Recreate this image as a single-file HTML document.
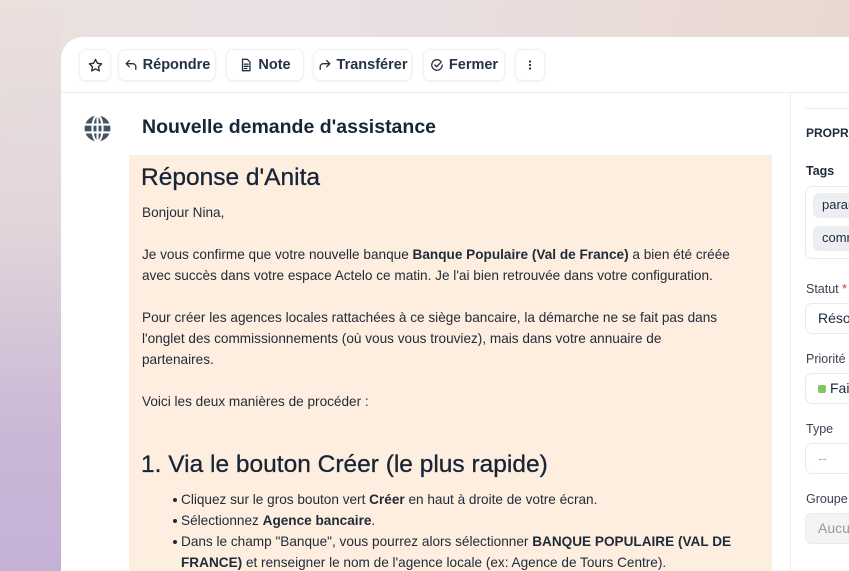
<!DOCTYPE html>
<html><head><meta charset="utf-8"><style>
*{margin:0;padding:0;box-sizing:border-box}
html,body{width:849px;height:571px;overflow:hidden}
body{font-family:"Liberation Sans",sans-serif;color:#1c2a3a;position:relative;
background:linear-gradient(100deg,#ebe0dc 0%,#e8e0e4 35%,#eadbd6 70%,#e8d7cf 100%);}
.purple{position:absolute;left:0;top:0;width:61px;height:571px;background:linear-gradient(180deg,rgba(0,0,0,0) 0%,#e1d5da 40%,#cbb8d6 75%,#c4b1d6 100%)}
.card{position:absolute;left:61px;top:37px;width:788px;height:534px;background:#fff;border-radius:22px 0 0 0;overflow:hidden}
.bar{position:absolute;left:0;top:0;width:100%;height:56px;border-bottom:1px solid #eceef0}
.btn{position:absolute;top:12px;height:32px;border:1px solid #eef0f2;border-radius:7px;box-shadow:0 1px 2px rgba(0,0,0,.05);font-size:14.5px;font-weight:bold;display:flex;align-items:center;justify-content:center;gap:5px;color:#253244}
.btn svg{width:14px;height:14px;fill:none;stroke:#253244;stroke-width:1.5;stroke-linecap:round;stroke-linejoin:round}
.t{position:absolute;white-space:nowrap}
.content{position:absolute;left:68px;top:118px;width:643px;height:416px;background:#fdeee0;overflow:hidden}
.p{position:absolute;left:13px;font-size:13.6px;line-height:21px;white-space:nowrap;color:#1f2a38}
.h{position:absolute;left:12px;font-size:24.5px;white-space:nowrap;color:#172536;-webkit-text-stroke:0.3px #172536}
li{list-style:none;position:relative}
li:before{content:"";position:absolute;left:-8px;top:9px;width:4px;height:4px;border-radius:50%;background:#1f2a38}
.side{position:absolute;left:729px;top:56px;width:59px;height:478px;border-left:1px solid #eef0f2;overflow:hidden}
.lab{position:absolute;left:15px;font-size:12.5px;color:#3a4250;white-space:nowrap}
.box{position:absolute;left:14px;width:80px;border:1px solid #e8eaed;border-radius:7px;white-space:nowrap}
</style></head><body>
<div class="purple"></div>
<div class="card">
 <div class="bar">
  <div class="btn" style="left:18px;width:32px"><svg viewBox="0 0 16 16" style="width:15px;height:15px"><path d="M8 1.5l2 4.1 4.5.6-3.3 3.1.8 4.5L8 11.6 4 13.8l.8-4.5L1.5 6.2 6 5.6z"/></svg></div>
  <div class="btn" style="left:57px;width:98px"><svg viewBox="0 0 16 16"><path d="M6 3L2.5 6.5 6 10M2.5 6.5H10a3.5 3.5 0 0 1 3.5 3.5v3"/></svg>Répondre</div>
  <div class="btn" style="left:165px;width:78px"><svg viewBox="0 0 16 16"><path d="M4 1.5h5.5L12.5 4.5v10h-8.5zM6 7h4.5M6 9.5h4.5M6 12h3"/></svg>Note</div>
  <div class="btn" style="left:252px;width:99px"><svg viewBox="0 0 16 16"><path d="M10 3l3.5 3.5L10 10M13.5 6.5H6A3.5 3.5 0 0 0 2.5 10v3"/></svg>Transférer</div>
  <div class="btn" style="left:362px;width:82px"><svg viewBox="0 0 16 16"><path d="M14 8a6 6 0 1 1-2-4.5M5.5 8l2 2 5.5-5.5"/></svg>Fermer</div>
  <div class="btn" style="left:454px;width:30px"><svg viewBox="0 0 16 16"><circle cx="8" cy="4" r=".6"/><circle cx="8" cy="8" r=".6"/><circle cx="8" cy="12" r=".6"/></svg></div>
 </div>
 <svg style="position:absolute;left:23px;top:78px" width="27" height="27" viewBox="0 0 24 24"><circle cx="12" cy="12" r="11.5" fill="#465363"/><g stroke="#fff" stroke-width="1.8" fill="none"><ellipse cx="12" cy="12" rx="4.5" ry="11.5"/><path d="M0 8.5h24M0 15.5h24M12 0v24"/></g></svg>
 <div class="t" style="left:81px;top:79px;font-size:19.5px;font-weight:bold;color:#172536">Nouvelle demande d'assistance</div>
 <div class="content">
  <div class="h" style="top:9px">Réponse d'Anita</div>
  <div class="p" style="top:47px">Bonjour Nina,</div>
  <div class="p" style="top:89px">Je vous confirme que votre nouvelle banque <b>Banque Populaire (Val de France)</b> a bien été créée<br>avec succès dans votre espace Actelo ce matin. Je l'ai bien retrouvée dans votre configuration.</div>
  <div class="p" style="top:152px">Pour créer les agences locales rattachées à ce siège bancaire, la démarche ne se fait pas dans<br>l'onglet des commissionnements (où vous vous trouviez), mais dans votre annuaire de<br>partenaires.</div>
  <div class="p" style="top:236px">Voici les deux manières de procéder :</div>
  <div class="h" style="top:296px">1. Via le bouton Créer (le plus rapide)</div>
  <ul class="p" style="top:334px;left:52px">
   <li>Cliquez sur le gros bouton vert <b>Créer</b> en haut à droite de votre écran.</li>
   <li>Sélectionnez <b>Agence bancaire</b>.</li>
   <li>Dans le champ "Banque", vous pourrez alors sélectionner <b>BANQUE POPULAIRE (VAL DE<br>FRANCE)</b> et renseigner le nom de l'agence locale (ex: Agence de Tours Centre).</li>
  </ul>
 </div>
 <div class="side">
  <div style="position:absolute;left:14px;top:15px;width:90px;border-top:1px solid #eceef0"></div>
  <div class="lab" style="top:33px;font-weight:bold;font-size:12px;color:#1e2b3a">PROPRIÉTÉS</div>
  <div class="lab" style="top:71px;font-weight:bold;color:#1e2b3a">Tags</div>
  <div class="box" style="top:93px;height:73px"></div>
  <div style="position:absolute;left:22px;top:100px;width:70px;height:25px;background:#eceef1;border-radius:6px;font-size:13px;padding:4px 0 0 9px;white-space:nowrap">paramètres</div>
  <div style="position:absolute;left:22px;top:133px;width:70px;height:25px;background:#eceef1;border-radius:6px;font-size:13px;padding:4px 0 0 9px;white-space:nowrap">commissions</div>
  <div class="lab" style="top:189px">Statut <span style="color:#d33">*</span></div>
  <div class="box" style="top:210px;height:31px;font-size:14px;padding:6px 0 0 12px">Résolu</div>
  <div class="lab" style="top:259px">Priorité</div>
  <div class="box" style="top:280px;height:31px;font-size:14px;padding:6px 0 0 12px"><span style="display:inline-block;width:8px;height:8px;background:#7dc95e;border-radius:2px;margin-right:4px"></span>Faible</div>
  <div class="lab" style="top:329px">Type</div>
  <div class="box" style="top:350px;height:31px;font-size:13px;padding:7px 0 0 12px;color:#aaa">--</div>
  <div class="lab" style="top:399px">Groupe</div>
  <div class="box" style="top:420px;height:31px;font-size:14px;padding:6px 0 0 12px;color:#999;background:#f3f4f6">Aucun</div>
 </div>
</div>
</body></html>
